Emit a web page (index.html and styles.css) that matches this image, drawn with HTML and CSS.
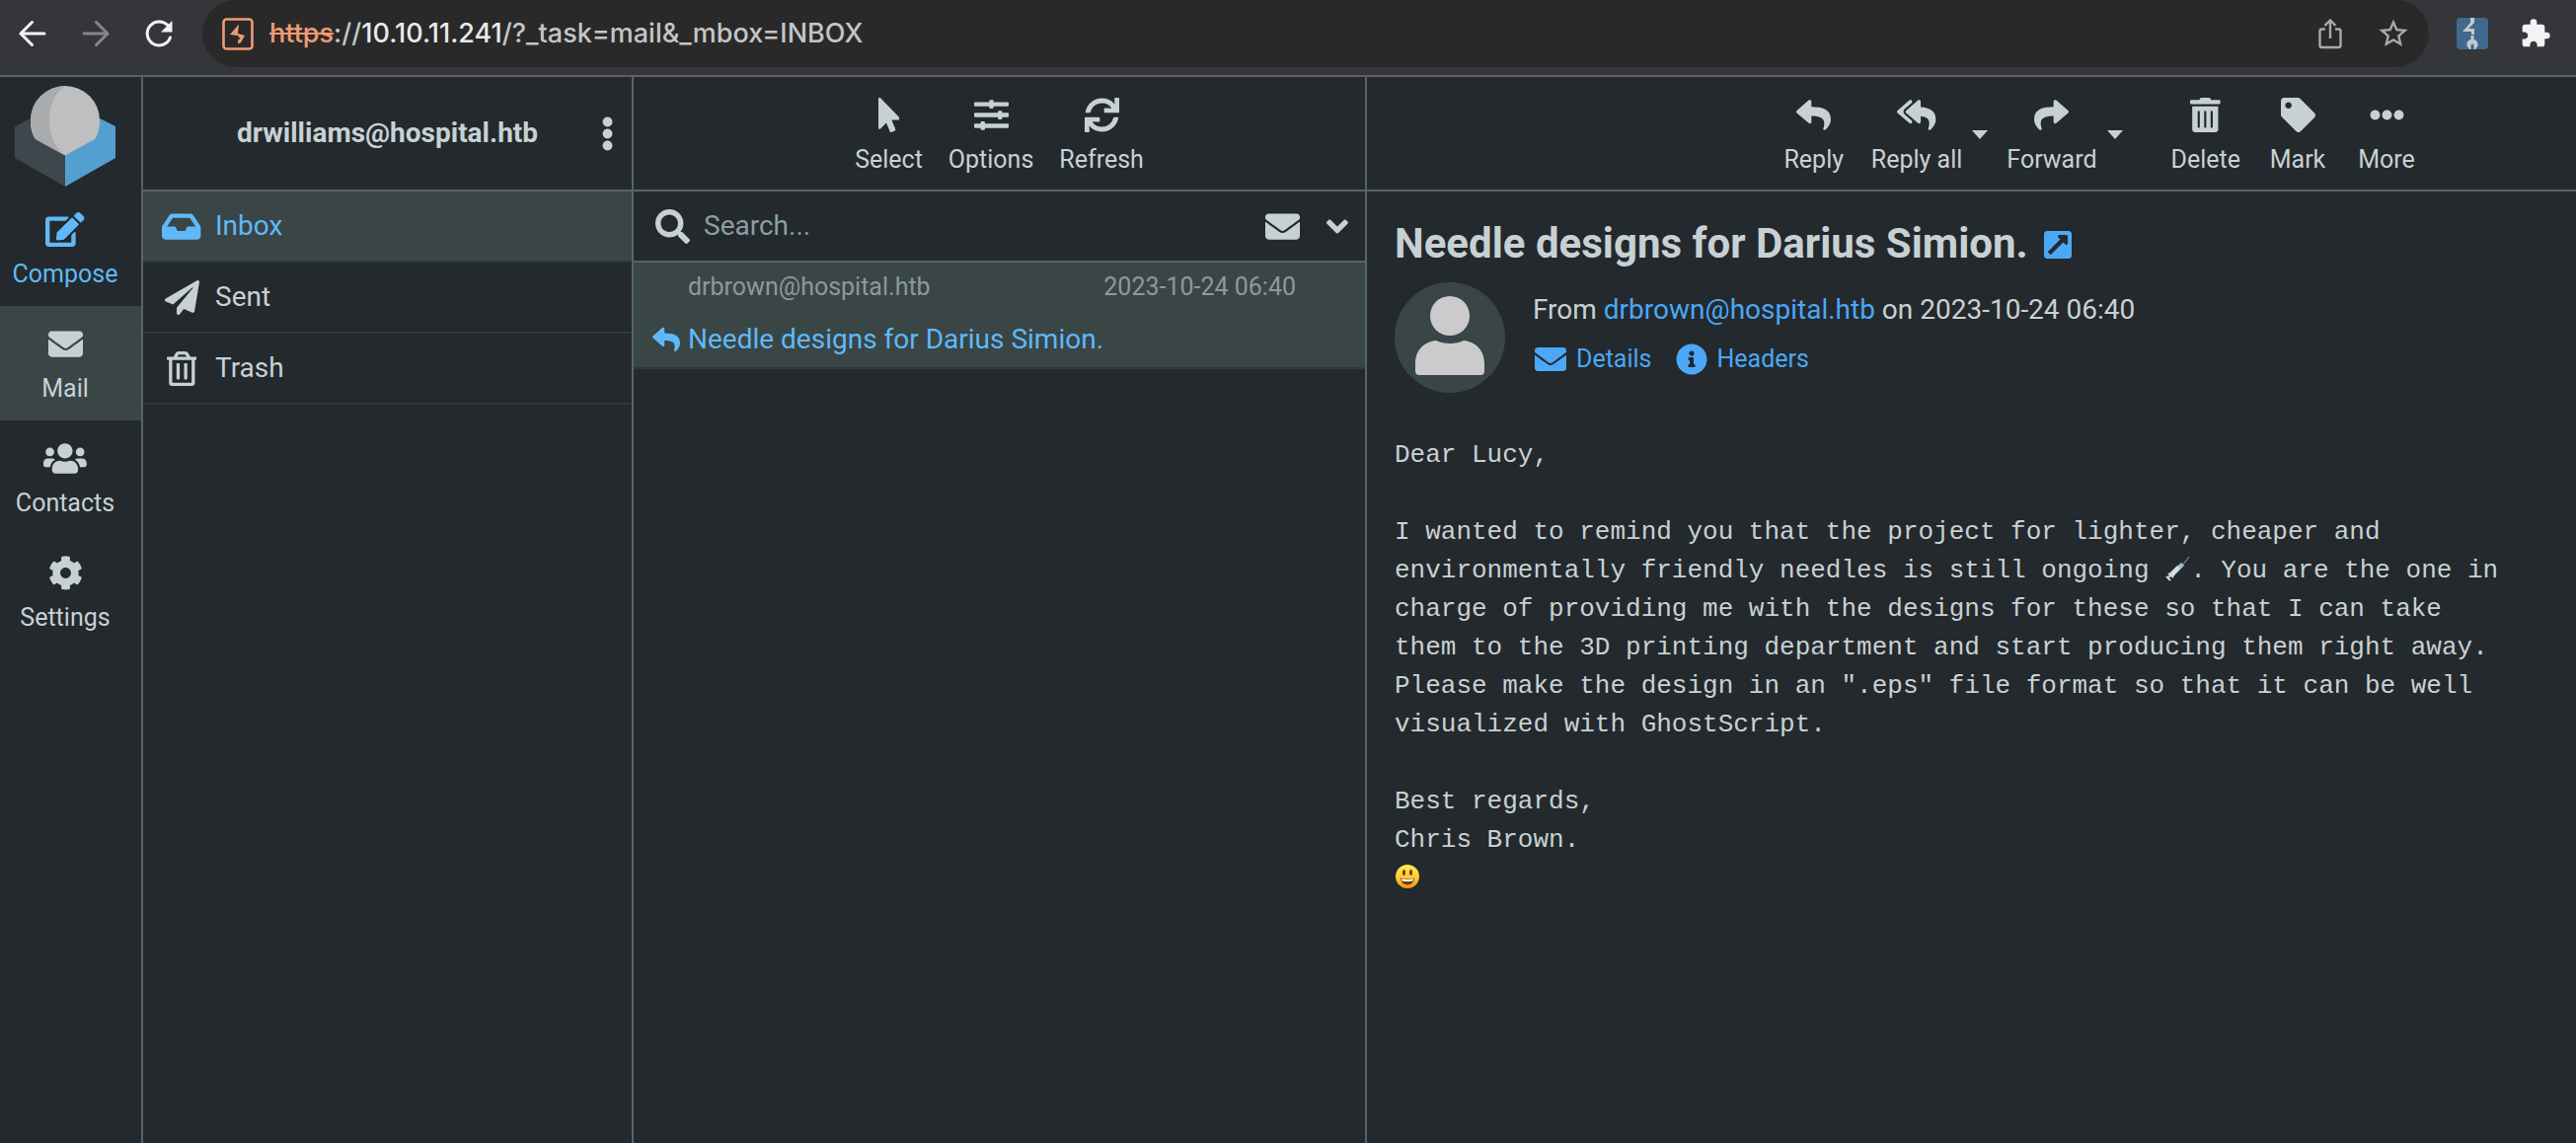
FILE: index.html
```html
<!DOCTYPE html>
<html lang="en">
<head>
<meta charset="utf-8">
<title>Needle designs for Darius Simion.</title>
<link rel="stylesheet" href="styles.css">
</head>
<body>
<header class="browser">
  <button class="nav" aria-label="Back"><svg class="glyph" viewBox="0 0 32 32"><path d="M28 16H4M15.500 4.500L4 16l11.500 11.500" fill="none" stroke="currentColor" stroke-width="3" stroke-linecap="round"/></svg></button>
  <button class="nav nav-off" aria-label="Forward"><svg class="glyph" viewBox="0 0 32 32"><path d="M4 16h24M16.500 4.500L28 16 16.500 27.500" fill="none" stroke="currentColor" stroke-width="3" stroke-linecap="round"/></svg></button>
  <button class="nav" aria-label="Reload"><svg class="glyph" viewBox="0 0 32 32"><path d="M26 9A12 12 0 1 0 27.500 20" fill="none" stroke="currentColor" stroke-width="3" stroke-linecap="round"/><path d="M29.500 3v11.500H18z" fill="currentColor"/></svg></button>
  <div class="address">
    <svg class="site" viewBox="0 0 32 33"><rect x="1.500" y="1.500" width="29" height="30" rx="3" fill="none" stroke="currentColor" stroke-width="2.600"/><path d="M17 6.500L8 17l7 1 1.500 0-.5 8.500 3-1.500 4-7-7-2z" fill="currentColor"/><path d="M14 19l4 2.500" stroke="#292929" stroke-width="2"/></svg>
    <div class="url"><s class="scheme">https</s>://<span class="host">10.10.11.241</span>/?_task=mail&amp;_mbox=INBOX</div>
    <button class="nav nav-soft" aria-label="Share"><svg class="glyph" viewBox="0 0 32 32"><path d="M11 11.500H7.500a2 2 0 0 0-2 2V28a2 2 0 0 0 2 2h17a2 2 0 0 0 2-2V13.500a2 2 0 0 0-2-2H21M16 21V3M10.500 8L16 2.500 21.500 8" fill="none" stroke="currentColor" stroke-width="2.400"/></svg></button>
    <button class="nav nav-soft" aria-label="Bookmark"><svg class="glyph" viewBox="1 1 22 22"><path d="M22 9.240l-7.190-.620L12 2 9.190 8.630 2 9.240l5.460 4.730L5.820 21 12 17.270 18.180 21l-1.630-7.030L22 9.240zM12 15.400l-3.760 2.270 1-4.280-3.320-2.880 4.380-.380L12 6.100l1.710 4.040 4.380.380-3.320 2.880 1 4.280L12 15.400z" fill="currentColor"/></svg></button>
  </div>
  <button class="nav" aria-label="Scanner"><svg class="glyph" viewBox="0 0 32 32"><rect width="32" height="32" rx="4" fill="#41688d"/><path d="M14 0h4v5l-6 6h6v3H6l8-9zM15 14h3v3h-3zM14.500 18h3v4a5 5 0 0 1 2 9v1h-2v-4l-1.500-2-1.500 2v4h-2v-1a5 5 0 0 1 2-9z" fill="#c4c8cc"/></svg></button>
  <button class="nav" aria-label="Extensions"><svg class="glyph" viewBox="0 0 24 24"><path d="M20.500 11H19V7c0-1.100-.900-2-2-2h-4V3.500a2.500 2.500 0 0 0-5 0V5H4c-1.100 0-1.990.900-1.990 2v3.800H3.500c1.490 0 2.700 1.210 2.700 2.700s-1.210 2.700-2.700 2.700H2V20c0 1.100.900 2 2 2h3.800v-1.500c0-1.490 1.210-2.700 2.700-2.700s2.700 1.210 2.700 2.700V22H17c1.100 0 2-.900 2-2v-4h1.500a2.500 2.500 0 0 0 0-5z" fill="currentColor"/></svg></button>
</header>

<div class="mail">
  <nav class="tasks">
    <div class="logo"><svg class="brand" viewBox="0 0 102 102"><path d="M0 41L51 15l51 26v32l-51 29L0 73z" fill="#3d474c"/><path d="M51 70l51-29v32l-51 29z" fill="#539fd0"/><path d="M86 33l16 8-20 26-31 20V60z" fill="#539fd0"/><path d="M51 70.500L21 54C17 48 16 42 16 35a35 35 0 0 1 70 0c0 7-1 13-5 19z" fill="#bebfc1"/><path d="M51 70.500L21 54C17 48 16 42 16 35A35 35 0 0 1 51 0C39 8 35 22 35 35c0 16 6 28 16 35.500z" fill="#aaabad"/></svg></div>
    <a href="#" class="tool task task-compose"><svg class="icon" viewBox="0 0 576 512"><path d="M402.600 83.200l90.200 90.200c3.800 3.800 3.800 10 0 13.800L274.400 405.600l-92.800 10.300c-12.400 1.400-22.900-9.100-21.500-21.500l10.300-92.800L388.800 83.200c3.800-3.800 10-3.800 13.800 0zm162-22.900l-48.800-48.800c-15.200-15.200-39.900-15.200-55.200 0l-35.400 35.400c-3.800 3.800-3.800 10 0 13.800l90.200 90.200c3.800 3.800 10 3.800 13.800 0l35.400-35.400c15.200-15.300 15.200-40 0-55.200zM384 346.200V448H64V128h229.800c3.200 0 6.200-1.300 8.500-3.500l40-40c7.600-7.600 2.200-20.500-8.500-20.500H48C21.500 64 0 85.500 0 112v352c0 26.500 21.500 48 48 48h352c26.500 0 48-21.500 48-48V306.200c0-10.700-12.900-16-20.500-8.500l-40 40c-2.200 2.300-3.500 5.300-3.500 8.500z"/></svg><span>Compose</span></a>
    <a href="#" class="tool task task-on"><svg class="icon" viewBox="0 0 512 512"><use href="#envelope"/></svg><span>Mail</span></a>
    <a href="#" class="tool task"><svg class="icon" viewBox="0 0 640 512"><path d="M96 224c35.300 0 64-28.700 64-64s-28.700-64-64-64-64 28.700-64 64 28.700 64 64 64zm448 0c35.300 0 64-28.700 64-64s-28.700-64-64-64-64 28.700-64 64 28.700 64 64 64zm32 32h-64c-17.600 0-33.500 7.100-45.100 18.600 40.300 22.100 68.900 62 75.100 109.400h66c17.700 0 32-14.300 32-32v-32c0-35.300-28.700-64-64-64zm-256 0c61.900 0 112-50.100 112-112S381.900 32 320 32 208 82.100 208 144s50.100 112 112 112zm76.800 32h-8.300c-20.800 10-43.900 16-68.500 16s-47.600-6-68.500-16h-8.300C179.600 288 128 339.600 128 403.200V432c0 26.500 21.500 48 48 48h288c26.500 0 48-21.500 48-48v-28.800c0-63.600-51.600-115.200-115.200-115.200zm-223.700-13.400C161.500 263.100 145.600 256 128 256H64c-35.300 0-64 28.700-64 64v32c0 17.700 14.300 32 32 32h65.900c6.300-47.400 34.900-87.300 75.200-109.400z"/></svg><span>Contacts</span></a>
    <a href="#" class="tool task"><svg class="icon" viewBox="0 0 512 512"><path d="M487.400 315.700l-42.600-24.600c4.300-23.200 4.300-47 0-70.200l42.600-24.600c4.900-2.800 7.100-8.600 5.500-14-11.100-35.600-30-67.800-54.700-94.600-3.800-4.100-10-5.100-14.800-2.300L380.800 110c-17.900-15.400-38.500-27.300-60.800-35.100V25.800c0-5.600-3.900-10.500-9.400-11.700-36.700-8.200-74.300-7.800-109.200 0-5.500 1.200-9.400 6.100-9.400 11.700V75c-22.200 7.900-42.800 19.800-60.800 35.100L88.700 85.500c-4.900-2.800-11-1.900-14.800 2.300-24.700 26.700-43.600 58.900-54.700 94.600-1.700 5.400.6 11.200 5.500 14L67.300 221c-4.300 23.200-4.300 47 0 70.200l-42.600 24.600c-4.900 2.800-7.100 8.600-5.500 14 11.100 35.600 30 67.800 54.700 94.600 3.800 4.100 10 5.100 14.800 2.300l42.600-24.600c17.900 15.400 38.500 27.300 60.800 35.100v49.200c0 5.600 3.900 10.500 9.400 11.700 36.700 8.200 74.300 7.800 109.200 0 5.500-1.200 9.400-6.100 9.400-11.700v-49.200c22.200-7.900 42.800-19.800 60.800-35.100l42.600 24.600c4.900 2.800 11 1.900 14.800-2.300 24.700-26.700 43.600-58.900 54.700-94.600 1.500-5.500-.7-11.300-5.600-14.100zM256 336c-44.100 0-80-35.900-80-80s35.900-80 80-80 80 35.900 80 80-35.900 80-80 80z"/></svg><span>Settings</span></a>
  </nav>

  <section class="folders">
    <header class="bar account">
      <h2 class="user">drwilliams@hospital.htb</h2>
      <button class="plain" aria-label="Folder actions"><svg class="icon" viewBox="0 0 192 512"><path d="M96 184c39.800 0 72 32.200 72 72s-32.200 72-72 72-72-32.200-72-72 32.200-72 72-72zM24 80c0 39.800 32.200 72 72 72s72-32.200 72-72S135.800 8 96 8 24 40.200 24 80zm0 352c0 39.800 32.200 72 72 72s72-32.200 72-72-32.200-72-72-72-72 32.200-72 72z"/></svg></button>
    </header>
    <ul class="folder-list">
      <li><a href="#" class="folder folder-on"><span class="slot"><svg class="icon" viewBox="0 0 576 512"><path d="M567.938 243.908L462.250 85.374A48.003 48.003 0 0 0 422.311 64H153.689a48 48 0 0 0-39.938 21.374L8.062 243.908A47.994 47.994 0 0 0 0 270.533V400c0 26.510 21.490 48 48 48h480c26.510 0 48-21.490 48-48V270.533a47.994 47.994 0 0 0-8.062-26.625zM162.252 128h251.497l85.333 128H376l-32 64H232l-32-64H76.918l85.334-128z"/></svg></span>Inbox</a></li>
      <li><a href="#" class="folder"><span class="slot"><svg class="icon" viewBox="0 0 512 512"><path d="M476 3.200L12.500 270.600c-18.100 10.400-15.800 35.600 2.200 43.200L121 358.400l287.300-253.200c5.500-4.900 13.300 2.600 8.600 8.300L176 407v80.500c0 23.600 28.500 32.900 42.500 15.800L282 426l124.600 52.200c14.200 6 30.400-2.900 33-18.200l72-432C515 7.800 493.300-6.800 476 3.200z"/></svg></span>Sent</a></li>
      <li><a href="#" class="folder"><span class="slot"><svg class="icon" viewBox="0 0 448 512"><path d="M268 416h24a12 12 0 0 0 12-12V188a12 12 0 0 0-12-12h-24a12 12 0 0 0-12 12v216a12 12 0 0 0 12 12zM432 80h-82.410l-34-56.700A48 48 0 0 0 274.410 0H173.590a48 48 0 0 0-41.160 23.300L98.410 80H16A16 16 0 0 0 0 96v16a16 16 0 0 0 16 16h16v336a48 48 0 0 0 48 48h288a48 48 0 0 0 48-48V128h16a16 16 0 0 0 16-16V96a16 16 0 0 0-16-16zM171.840 50.910A6 6 0 0 1 177 48h94a6 6 0 0 1 5.150 2.910L293.610 80H154.390zM368 464H80V128h288zm-212-48h24a12 12 0 0 0 12-12V188a12 12 0 0 0-12-12h-24a12 12 0 0 0-12 12v216a12 12 0 0 0 12 12z"/></svg></span>Trash</a></li>
    </ul>
  </section>

  <section class="messages">
    <header class="bar bar-center">
      <button class="tool"><svg class="icon" viewBox="0 0 320 512"><path d="M302.189 329.126H196.105l55.831 135.993c3.889 9.428-.555 19.999-9.444 23.999l-49.165 21.427c-9.165 4-19.443-.571-23.332-9.714l-53.053-129.136-86.664 89.138C18.729 472.710 0 463.554 0 447.977V18.299C0 1.899 19.921-6.096 30.277 5.443l284.412 292.542c11.472 11.179 3.007 31.141-12.500 31.141z"/></svg><span>Select</span></button>
      <button class="tool"><svg class="icon" viewBox="0 0 512 512"><path d="M496 384H160v-16c0-8.800-7.200-16-16-16h-32c-8.800 0-16 7.200-16 16v16H16c-8.800 0-16 7.200-16 16v32c0 8.800 7.200 16 16 16h80v16c0 8.800 7.200 16 16 16h32c8.800 0 16-7.200 16-16v-16h336c8.800 0 16-7.200 16-16v-32c0-8.800-7.200-16-16-16zm0-160h-80v-16c0-8.800-7.200-16-16-16h-32c-8.800 0-16 7.200-16 16v16H16c-8.800 0-16 7.200-16 16v32c0 8.800 7.200 16 16 16h336v16c0 8.800 7.200 16 16 16h32c8.800 0 16-7.200 16-16v-16h80c8.800 0 16-7.200 16-16v-32c0-8.800-7.200-16-16-16zm0-160H288V48c0-8.800-7.200-16-16-16h-32c-8.800 0-16 7.200-16 16v16H16C7.200 64 0 71.200 0 80v32c0 8.800 7.200 16 16 16h208v16c0 8.800 7.200 16 16 16h32c8.800 0 16-7.200 16-16v-16h208c8.800 0 16-7.200 16-16V80c0-8.800-7.200-16-16-16z"/></svg><span>Options</span></button>
      <button class="tool"><svg class="icon" viewBox="0 0 512 512"><path d="M440.650 12.570l4 82.770A247.160 247.160 0 0 0 255.830 8C134.730 8 33.910 94.920 12.290 209.820A12 12 0 0 0 24.090 224h49.050a12 12 0 0 0 11.670-9.260 175.910 175.910 0 0 1 317-56.940l-101.460-4.860a12 12 0 0 0-12.570 12v47.410a12 12 0 0 0 12 12H500a12 12 0 0 0 12-12V12a12 12 0 0 0-12-12h-47.370a12 12 0 0 0-11.980 12.570zM255.830 432a175.610 175.610 0 0 1-146-77.800l101.800 4.870a12 12 0 0 0 12.570-12v-47.400a12 12 0 0 0-12-12H12a12 12 0 0 0-12 12V500a12 12 0 0 0 12 12h47.350a12 12 0 0 0 12-12.600l-4.150-82.570A247.170 247.170 0 0 0 255.830 504c121.110 0 221.930-86.920 243.550-201.820a12 12 0 0 0-11.800-14.180h-49.050a12 12 0 0 0-11.670 9.260A175.860 175.860 0 0 1 255.830 432z"/></svg><span>Refresh</span></button>
    </header>
    <form class="search">
      <label for="q" aria-label="Search"><svg class="icon" viewBox="0 0 512 512"><path d="M505 442.700L405.300 343c-4.500-4.500-10.600-7-17-7H372c27.600-35.300 44-79.700 44-128C416 93.100 322.900 0 208 0S0 93.100 0 208s93.100 208 208 208c48.300 0 92.700-16.400 128-44v16.300c0 6.400 2.500 12.500 7 17l99.700 99.700c9.400 9.400 24.600 9.400 33.900 0l28.300-28.300c9.400-9.400 9.400-24.600.1-34zM208 336c-70.700 0-128-57.200-128-128 0-70.700 57.200-128 128-128 70.700 0 128 57.200 128 128 0 70.700-57.200 128-128 128z"/></svg></label>
      <input id="q" class="query" type="text" placeholder="Search...">
      <button type="button" class="plain" aria-label="Unread"><svg class="icon" viewBox="0 0 512 512"><use href="#envelope"/></svg></button>
      <button type="button" class="plain" aria-label="Search options"><svg class="icon" viewBox="0 0 320 512"><path d="M143 352.300L7 216.300c-9.400-9.400-9.400-24.600 0-33.900l22.600-22.600c9.400-9.400 24.600-9.400 33.900 0l96.400 96.400 96.400-96.400c9.400-9.400 24.600-9.400 33.900 0l22.600 22.600c9.400 9.400 9.400 24.600 0 33.900l-136 136c-9.200 9.400-24.400 9.400-33.800 0z"/></svg></button>
    </form>
    <article class="message">
      <div class="meta"><span>drbrown@hospital.htb</span><time>2023-10-24 06:40</time></div>
      <a href="#" class="subject"><svg class="icon icon-small" viewBox="0 0 512 512"><use href="#reply"/></svg>Needle designs for Darius Simion.</a>
    </article>
  </section>

  <main class="content">
    <header class="bar bar-end">
      <button class="tool"><svg class="icon" viewBox="0 0 512 512"><path id="reply" d="M8.309 189.836L184.313 37.851C199.719 24.546 224 35.347 224 56.015v80.053c160.629 1.839 288 34.032 288 186.258 0 61.441-39.581 122.309-83.333 154.132-13.653 9.931-33.111-2.533-28.077-18.631 45.344-145.012-21.507-183.510-176.590-185.742V360c0 20.700-24.300 31.453-39.687 18.164l-176.004-152c-11.071-9.562-11.086-26.753 0-36.328z"/></svg><span>Reply</span></button>
      <button class="tool"><svg class="icon" viewBox="0 0 576 512"><path d="M136.309 189.836L312.313 37.851C327.720 24.546 352 35.348 352 56.015v82.763c129.182 10.231 224 52.212 224 183.548 0 61.441-39.582 122.309-83.333 154.132-13.653 9.931-33.111-2.533-28.077-18.631 38.512-123.162-3.922-169.482-112.590-182.015v84.175c0 20.701-24.300 31.453-39.687 18.164L136.309 226.164c-11.071-9.561-11.086-26.753 0-36.328zm-128 36.328L184.313 378.150C199.700 391.439 224 380.687 224 359.986v-15.818l-108.606-93.785A55.960 55.960 0 0 1 96 207.998a55.953 55.953 0 0 1 19.393-42.380L224 71.832V56.015c0-20.667-24.280-31.469-39.687-18.164L8.309 189.836c-11.086 9.575-11.071 26.767 0 36.328z"/></svg><span>Reply all</span></button>
      <button class="more" aria-label="Reply all options"><svg class="caret" viewBox="0 0 16 9"><path d="M0 0h16L8 9z"/></svg></button>
      <button class="tool"><svg class="icon" viewBox="0 0 512 512"><path d="M503.691 189.836L327.687 37.851C312.281 24.546 288 35.347 288 56.015v80.053C127.371 137.907 0 170.100 0 322.326c0 61.441 39.581 122.309 83.333 154.132 13.653 9.931 33.111-2.533 28.077-18.631C66.066 312.814 132.917 274.316 288 272.085V360c0 20.700 24.300 31.453 39.687 18.164l176.004-152c11.071-9.562 11.086-26.753 0-36.328z"/></svg><span>Forward</span></button>
      <button class="more more-last" aria-label="Forward options"><svg class="caret" viewBox="0 0 16 9"><path d="M0 0h16L8 9z"/></svg></button>
      <button class="tool"><svg class="icon" viewBox="0 0 448 512"><path d="M32 464a48 48 0 0 0 48 48h288a48 48 0 0 0 48-48V128H32zm272-256a16 16 0 0 1 32 0v224a16 16 0 0 1-32 0zm-96 0a16 16 0 0 1 32 0v224a16 16 0 0 1-32 0zm-96 0a16 16 0 0 1 32 0v224a16 16 0 0 1-32 0zM432 32H312l-9.400-18.700A24 24 0 0 0 281.100 0H166.800a23.720 23.720 0 0 0-21.400 13.300L136 32H16A16 16 0 0 0 0 48v32a16 16 0 0 0 16 16h416a16 16 0 0 0 16-16V48a16 16 0 0 0-16-16z"/></svg><span>Delete</span></button>
      <button class="tool"><svg class="icon" viewBox="0 0 512 512"><path d="M0 252.118V48C0 21.490 21.490 0 48 0h204.118a48 48 0 0 1 33.941 14.059l211.882 211.882c18.745 18.745 18.745 49.137 0 67.882L293.823 497.941c-18.745 18.745-49.137 18.745-67.882 0L14.059 286.059A48 48 0 0 1 0 252.118zM112 64c-26.510 0-48 21.490-48 48s21.490 48 48 48 48-21.490 48-48-21.490-48-48-48z"/></svg><span>Mark</span></button>
      <button class="tool"><svg class="icon" viewBox="0 0 512 512"><path d="M328 256c0 39.800-32.200 72-72 72s-72-32.200-72-72 32.200-72 72-72 72 32.200 72 72zm104-72c-39.800 0-72 32.200-72 72s32.200 72 72 72 72-32.200 72-72-32.200-72-72-72zm-352 0c-39.800 0-72 32.200-72 72s32.200 72 72 72 72-32.200 72-72-32.200-72-72-72z"/></svg><span>More</span></button>
    </header>
    <div class="reader">
      <h1 class="title">Needle designs for Darius Simion.<a href="#" class="open" aria-label="Open in new window"><svg class="icon icon-link" viewBox="0 0 448 512"><path d="M448 80v352c0 26.510-21.490 48-48 48H48c-26.510 0-48-21.490-48-48V80c0-26.510 21.490-48 48-48h352c26.510 0 48 21.490 48 48zm-88 16H248.029c-21.313 0-32.080 25.861-16.971 40.971l31.984 31.987L67.515 364.485c-4.686 4.686-4.686 12.284 0 16.971l31.029 31.029c4.687 4.686 12.285 4.686 16.971 0l195.526-195.526 31.988 31.991C358.058 263.977 384 253.425 384 231.979V120c0-13.255-10.745-24-24-24z"/></svg></a></h1>
      <div class="sender">
        <svg class="avatar" viewBox="0 0 112 112"><circle cx="56" cy="56" r="56" fill="#3a4548"/><circle cx="56" cy="34" r="20" fill="#cbcbcb"/><path d="M42 59c8 4 20 4 28 0 12 1 21 10 21 23v8q0 4-4 4H25q-4 0-4-4v-8c0-13 9-22 21-23z" fill="#cbcbcb"/></svg>
        <div class="summary">
          <p class="from">From <a href="#" class="link">drbrown@hospital.htb</a> on 2023-10-24 06:40</p>
          <p class="links">
            <a href="#" class="link detail"><svg class="icon icon-link" viewBox="0 0 512 512"><path id="envelope" d="M502.300 190.800c3.900-3.100 9.700-.2 9.700 4.700V400c0 26.500-21.500 48-48 48H48c-26.500 0-48-21.500-48-48V195.600c0-5 5.700-7.800 9.700-4.700 22.400 17.400 52.100 39.500 154.100 113.600 21.100 15.400 56.700 47.800 92.200 47.600 35.700.3 72-32.800 92.300-47.600 102-74.100 131.600-96.300 154-113.700zM256 320c23.200.4 56.600-29.200 73.400-41.400 132.700-96.300 142.800-104.700 173.400-128.700 5.800-4.500 9.200-11.500 9.200-18.900v-19c0-26.500-21.500-48-48-48H48c-26.500 0-48 21.500-48 48v19c0 7.400 3.400 14.300 9.200 18.900 30.600 23.900 40.700 32.400 173.400 128.700 16.800 12.200 50.200 41.800 73.400 41.400z"/></svg>Details</a>
            <a href="#" class="link detail"><svg class="icon icon-link" viewBox="0 0 512 512"><path d="M256 8C119.043 8 8 119.083 8 256c0 136.997 111.043 248 248 248s248-111.003 248-248C504 119.083 392.957 8 256 8zm0 110c23.196 0 42 18.804 42 42s-18.804 42-42 42-42-18.804-42-42 18.804-42 42-42zm56 254c0 6.627-5.373 12-12 12h-88c-6.627 0-12-5.373-12-12v-24c0-6.627 5.373-12 12-12h12v-64h-12c-6.627 0-12-5.373-12-12v-24c0-6.627 5.373-12 12-12h64c6.627 0 12 5.373 12 12v100h12c6.627 0 12 5.373 12 12v24z"/></svg>Headers</a>
          </p>
        </div>
      </div>
      <pre class="body">Dear Lucy,

I wanted to remind you that the project for lighter, cheaper and
<span>environmentally friendly needles is still ongoing <svg class="emoji" viewBox="0 0 26 26"><path d="M25 1l-7 9" stroke="#9aa3a8" stroke-width="1"/><path d="M17 7l3 3L9 21l-4-3z" fill="#9fc3d6"/><path d="M13 10l3 3-7 8-4-3z" fill="#d5dde0"/><path d="M4 18l5 4M2 21l4 4M3 23l3-3" stroke="#cfd4d6" stroke-width="2" fill="none"/></svg>. You are the one in</span>
charge of providing me with the designs for these so that I can take
them to the 3D printing department and start producing them right away.
Please make the design in an ".eps" file format so that it can be well
visualized with GhostScript.

Best regards,
Chris Brown.
<svg class="emoji" viewBox="0 0 26 26"><defs><linearGradient id="sun" x2="0" y2="1"><stop offset="0" stop-color="#fff04e"/><stop offset=".6" stop-color="#fdc62f"/><stop offset="1" stop-color="#ee9516"/></linearGradient></defs><circle cx="13" cy="13" r="12" fill="url(#sun)"/><ellipse cx="9.500" cy="9" rx="1.500" ry="3" fill="#6b3d0b"/><ellipse cx="16.500" cy="9" rx="1.500" ry="3" fill="#6b3d0b"/><path d="M6 14.500q7 2 14 0-1 7-7 7t-7-7z" fill="#6b3d0b"/><path d="M7 15.200q6 1.600 12 0l-.5 2.300q-5.500 1-11 0z" fill="#fff"/></svg></pre>
    </div>
  </main>
</div>
</body>
</html>
```
FILE: styles.css
```css
:root {
  --bg: #24292d;
  --active: #3a4546;
  --line: #56636a;
  --faint: #30383b;
  --text: #c7d1d4;
  --muted: #8c999b;
  --accent: #5fb9f7;
  --link: #4aa8f6;
}

* { box-sizing: border-box; }

body {
  margin: 0;
  min-height: 100vh;
  display: flex;
  flex-direction: column;
  background: var(--bg);
  color: var(--text);
  font: 28px/42px Roboto, "Liberation Sans", sans-serif;
}

h1, h2, p, ul, pre { margin: 0; padding: 0; }
ul { list-style: none; }
a { color: inherit; text-decoration: none; }
svg { display: block; fill: currentColor; }

button {
  margin: 0;
  padding: 0;
  border: 0;
  background: none;
  color: inherit;
  font: inherit;
}

.icon { height: 35px; }
.icon-small { height: 28px; }
.icon-link { height: 32px; }
.plain { flex: none; }

/* browser toolbar */
.browser {
  height: 78px;
  padding: 0 25px 8px 17px;
  display: flex;
  align-items: center;
  gap: 32px;
  border-bottom: 2px solid #5e6065;
  background: #35363a;
  color: #f1f3f4;
}
.nav { flex: none; width: 32px; }
.nav-off { color: #85868a; }
.nav-soft { color: #a9aaab; }
.glyph { width: 32px; height: 32px; }
.address {
  flex: 1;
  height: 68px;
  margin: 0 -4px;
  padding: 0 20px;
  display: flex;
  align-items: center;
  gap: 32px;
  border-radius: 34px;
  background: #292929;
}
.site { flex: none; height: 33px; color: #ee9a72; }
.url {
  flex: 1;
  margin-left: -16px;
  color: #c4c5c6;
  font-family: Inter, Roboto, sans-serif;
  font-size: 27px;
  font-weight: 500;
}
.scheme { color: #ee9a72; }
.host { color: #e9eaec; }

/* layout */
.mail {
  flex: 1;
  display: grid;
  grid-template-columns: 145px 497px 743px 1fr;
}
.tasks, .folders, .messages { border-right: 2px solid var(--line); }

.bar {
  height: 116px;
  display: flex;
  align-items: flex-start;
  border-bottom: 2px solid var(--line);
}
.bar-center { justify-content: center; }
.bar-end { justify-content: flex-end; padding-right: 147px; }

.tool {
  min-width: 90px;
  padding: 21px 13px 0;
  display: flex;
  flex-direction: column;
  align-items: center;
  gap: 9px;
  font-size: 25px;
  line-height: 38px;
}
.more { width: 22px; margin-left: -3px; padding-top: 54px; }
.more-last { margin-right: 30px; }
.caret { width: 16px; height: 9px; }

/* task menu */
.logo { height: 116px; padding: 9px 15px 0; }
.brand { width: 102px; height: 102px; }
.task { height: 116px; padding-right: 24px; }
.task-compose { color: var(--accent); }
.task-on { background: var(--active); }

/* folders */
.account {
  padding: 0 18px;
  display: grid;
  grid-template-columns: 1fr auto 1fr;
  align-items: center;
}
.user { grid-column: 2; font-size: 28px; font-weight: 700; }
.account .plain { justify-self: end; }
.folder {
  height: 72px;
  padding-left: 18px;
  display: flex;
  align-items: center;
  gap: 13px;
  border-bottom: 2px solid var(--faint);
}
.folder-on { background: var(--active); color: var(--accent); }
.slot { width: 42px; display: flex; justify-content: center; }

/* message list */
.search {
  height: 72px;
  padding: 0 17px 0 22px;
  display: flex;
  align-items: center;
  border-bottom: 2px solid var(--line);
}
.search .plain { margin-left: 27px; }
.query {
  flex: 1;
  min-width: 0;
  padding: 0 0 0 14px;
  border: 0;
  background: none;
  color: var(--text);
  font: inherit;
}
.query::placeholder { color: #8b9ea2; opacity: 1; }
.message {
  padding: 6px 70px 7px 19px;
  border-bottom: 2px solid var(--faint);
  background: var(--active);
}
.meta {
  margin-bottom: 13px;
  padding-left: 36px;
  display: flex;
  justify-content: space-between;
  color: var(--muted);
  font-size: 25px;
  line-height: 38px;
}
.subject { display: flex; align-items: center; gap: 8px; color: var(--accent); }

/* message */
.reader { padding: 21px 28px; }
.title {
  display: flex;
  align-items: center;
  gap: 16px;
  font-size: 42px;
  line-height: 64px;
}
.open, .link { color: var(--link); }
.open { padding-top: 2px; }
.sender { margin-top: 7px; display: flex; gap: 28px; }
.avatar { flex: none; width: 112px; height: 112px; }
.summary { padding-top: 7px; }
.links { margin-top: 10px; padding-left: 2px; display: flex; gap: 24px; }
.detail {
  display: flex;
  align-items: center;
  gap: 10px;
  font-size: 25px;
  line-height: 38px;
}
.body {
  margin-top: 44px;
  font: 26px/39px "Liberation Mono", monospace;
}
.emoji { display: inline-block; width: 26px; height: 26px; vertical-align: -4px; }
```
